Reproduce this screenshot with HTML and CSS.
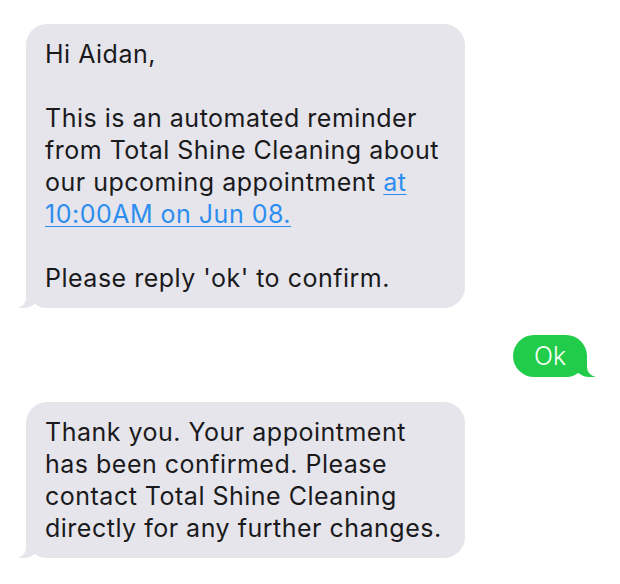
FILE: index.html
```html
<!DOCTYPE html>
<html>
<head>
<meta charset="utf-8">
<link rel="stylesheet" href="styles.css">
</head>
<body>
<div class="thread">
  <div class="bubble received first">
    <p>Hi Aidan,</p>
    <p>This is an automated reminder<br>from Total Shine Cleaning about<br>our upcoming appointment <a href="#">at<br>10:00AM on Jun 08.</a></p>
    <p>Please reply 'ok' to confirm.</p>
  </div>
  <div class="bubble sent">Ok</div>
  <div class="bubble received third">
    <p>Thank you. Your appointment<br>has been confirmed. Please<br>contact Total Shine Cleaning<br>directly for any further changes.</p>
  </div>
</div>
</body>
</html>
```

FILE: styles.css
```css
html, body {
  margin: 0;
  padding: 0;
  background: #ffffff;
}
.thread {
  display: flex;
  flex-direction: column;
  padding: 24px 0 0 26px;
  width: 620px;
  box-sizing: border-box;
  font-family: Inter, "Liberation Sans", Arial, sans-serif;
  font-size: 25px;
  line-height: 32px;
  letter-spacing: 0.5px;
  color: #1a1a1c;
}
.bubble {
  position: relative;
  border-radius: 21px;
  box-sizing: border-box;
}
.bubble p {
  margin: 0;
}
.bubble p + p {
  margin-top: 32px;
}
.received {
  background: #e6e5eb;
  width: 439px;
  padding: 14px 6px 14px 19px;
  align-self: flex-start;
}
.received::before {
  content: "";
  position: absolute;
  bottom: 0;
  left: -8px;
  width: 22px;
  height: 22px;
  background: #e6e5eb;
  border-bottom-right-radius: 16px;
}
.received::after {
  content: "";
  position: absolute;
  bottom: 0;
  left: -12px;
  width: 12px;
  height: 22px;
  background: #ffffff;
  border-bottom-right-radius: 10px;
}
.received a {
  color: #2d8ef0;
  text-decoration: underline;
  text-underline-offset: 3px;
  text-decoration-thickness: 1px;
}
.sent {
  align-self: flex-end;
  margin: 27px 33px 0 0;
  width: 74px;
  height: 42px;
  background: #22cc4b;
  color: #f4fff6;
  font-weight: 300;
  display: flex;
  align-items: center;
  justify-content: center;
  line-height: 42px;
  letter-spacing: 0;
}
.sent::before {
  content: "";
  position: absolute;
  bottom: 0;
  right: -8px;
  width: 22px;
  height: 22px;
  background: #22cc4b;
  border-bottom-left-radius: 16px;
}
.sent::after {
  content: "";
  position: absolute;
  bottom: 0;
  right: -12px;
  width: 12px;
  height: 22px;
  background: #ffffff;
  border-bottom-left-radius: 10px;
}
.third {
  margin-top: 25px;
}
```
